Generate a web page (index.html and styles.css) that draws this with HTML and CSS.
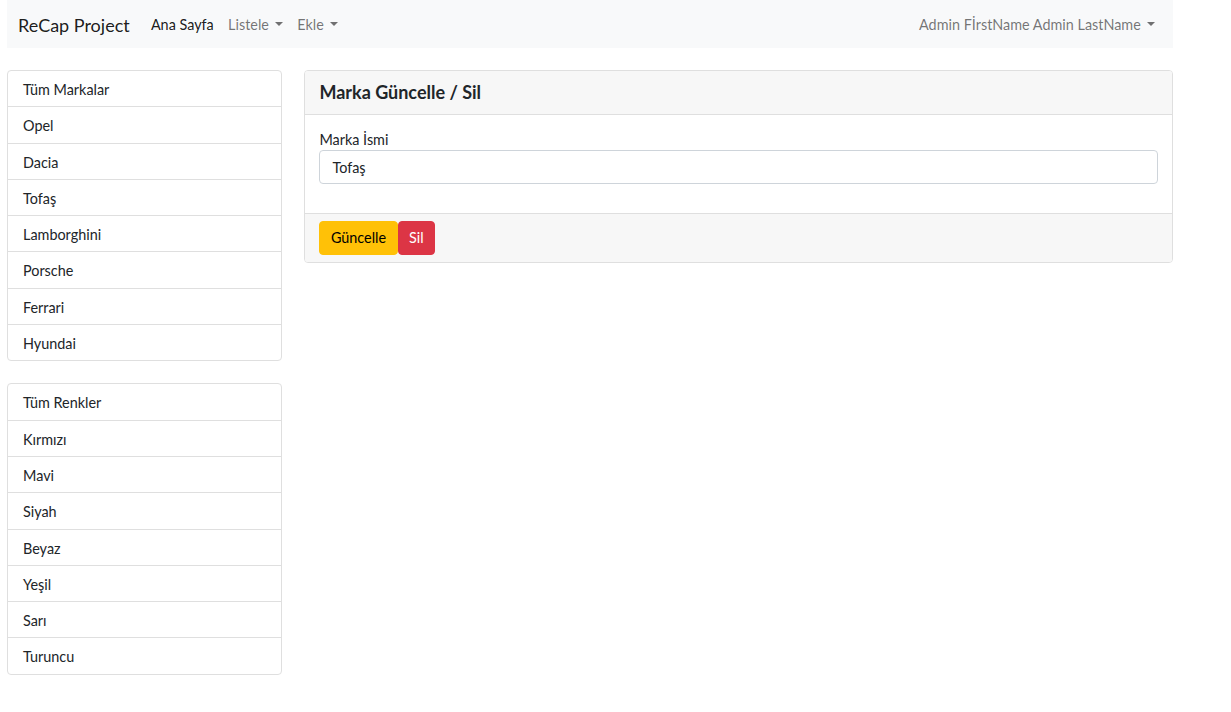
FILE: index.html
```html
<!DOCTYPE html>
<html lang="tr">
<head>
<meta charset="utf-8">
<title>ReCap Project</title>
<link rel="stylesheet" href="styles.css">
</head>
<body>
<div class="page">
  <nav class="navbar">
    <div class="nav-left">
      <span class="brand">ReCap Project</span>
      <span class="nav-link active">Ana Sayfa</span>
      <span class="nav-link">Listele<span class="caret"></span></span>
      <span class="nav-link">Ekle<span class="caret"></span></span>
    </div>
    <div class="nav-right">
      <span class="nav-link">Admin FİrstName Admin LastName<span class="caret"></span></span>
    </div>
  </nav>

  <div class="content">
    <aside class="sidebar">
      <ul class="list-group">
        <li class="list-item">Tüm Markalar</li>
        <li class="list-item">Opel</li>
        <li class="list-item">Dacia</li>
        <li class="list-item">Tofaş</li>
        <li class="list-item">Lamborghini</li>
        <li class="list-item">Porsche</li>
        <li class="list-item">Ferrari</li>
        <li class="list-item">Hyundai</li>
      </ul>
      <ul class="list-group">
        <li class="list-item">Tüm Renkler</li>
        <li class="list-item">Kırmızı</li>
        <li class="list-item">Mavi</li>
        <li class="list-item">Siyah</li>
        <li class="list-item">Beyaz</li>
        <li class="list-item">Yeşil</li>
        <li class="list-item">Sarı</li>
        <li class="list-item">Turuncu</li>
      </ul>
    </aside>

    <main class="main">
      <div class="card">
        <div class="card-header">
          <h5 class="card-title">Marka Güncelle / Sil</h5>
        </div>
        <div class="card-body">
          <div class="form-group">
            <label class="form-label" for="brandName">Marka İsmi</label>
            <input class="form-control" id="brandName" type="text" value="Tofaş">
          </div>
        </div>
        <div class="card-footer">
          <button class="btn btn-warning">Güncelle</button><button class="btn btn-danger">Sil</button>
        </div>
      </div>
    </main>
  </div>
</div>
</body>
</html>
```

FILE: styles.css
```css
* {
  box-sizing: border-box;
}

html, body {
  margin: 0;
  padding: 0;
  background: #fff;
}

body {
  font-family: "Segoe UI", Lato, "Liberation Sans", sans-serif;
  font-size: 14.4px;
  line-height: 21.6px;
  color: #212529;
}

.page {
  width: 1173px;
  padding-left: 7px;
}

/* Navbar */
.navbar {
  height: 48px;
  background: #f8f9fa;
  display: flex;
  align-items: center;
  justify-content: space-between;
  padding: 2px 11px 0 11px;
}

.nav-left,
.nav-right {
  display: flex;
  align-items: center;
}

.brand {
  font-size: 18px;
  line-height: 27px;
  color: rgba(0, 0, 0, 0.9);
  margin-right: 14px;
}

.nav-link {
  padding: 0 7.2px;
  color: rgba(0, 0, 0, 0.55);
  display: inline-flex;
  align-items: center;
}

.nav-link.active {
  color: rgba(0, 0, 0, 0.9);
}

.nav-right .nav-link {
  padding-right: 7.2px;
}

.caret {
  display: inline-block;
  margin-left: 6px;
  width: 0;
  height: 0;
  border-top: 4.5px solid rgba(0, 0, 0, 0.55);
  border-left: 4.5px solid transparent;
  border-right: 4.5px solid transparent;
  position: relative;
  top: -1px;
}

/* Content */
.content {
  display: grid;
  grid-template-columns: 275px 1fr;
  column-gap: 22px;
  margin-top: 22px;
}

.sidebar {
  display: flex;
  flex-direction: column;
  gap: 22px;
}

.list-group {
  list-style: none;
  margin: 0;
  padding: 0;
  border: 1px solid #dfdfdf;
  border-radius: 4px;
  background: #fff;
}

.list-item {
  padding: 8px 15px 6px;
  line-height: 21.3px;
  border-top: 1px solid #dfdfdf;
}

.list-item:first-child {
  border-top: none;
}

/* Card */
.card {
  border: 1px solid #dfdfdf;
  border-radius: 4px;
  background: #fff;
  overflow: hidden;
}

.card-header {
  background: #f7f7f7;
  border-bottom: 1px solid #dfdfdf;
  padding: 6px 14.4px 7px;
  height: 44px;
}

.card-title {
  margin: 0;
  font-size: 18px;
  line-height: 30px;
  font-weight: 700;
  color: #212529;
}

.card-body {
  padding: 14px 14.4px 14.4px;
}

.form-group {
  margin-bottom: 14.4px;
}

.form-label {
  display: block;
  line-height: 21px;
}

.form-control {
  display: block;
  width: 100%;
  height: 34px;
  padding: 5px 12px;
  font-family: inherit;
  font-size: 14.4px;
  color: #212529;
  border: 1px solid #ced4da;
  border-radius: 4px;
  background: #fff;
  outline: none;
}

.card-footer {
  background: #f7f7f7;
  border-top: 1px solid #dfdfdf;
  padding: 7px 14.4px;
  display: flex;
}

.btn {
  font-family: inherit;
  font-size: 14.4px;
  line-height: 21.6px;
  height: 34px;
  padding: 5px 10.5px;
  border: 1px solid transparent;
  border-radius: 4px;
  cursor: pointer;
}

.btn-warning {
  background: #ffc107;
  border-color: #ffc107;
  color: #000;
}

.btn-danger {
  background: #dc3545;
  border-color: #dc3545;
  color: #fff;
}
```
